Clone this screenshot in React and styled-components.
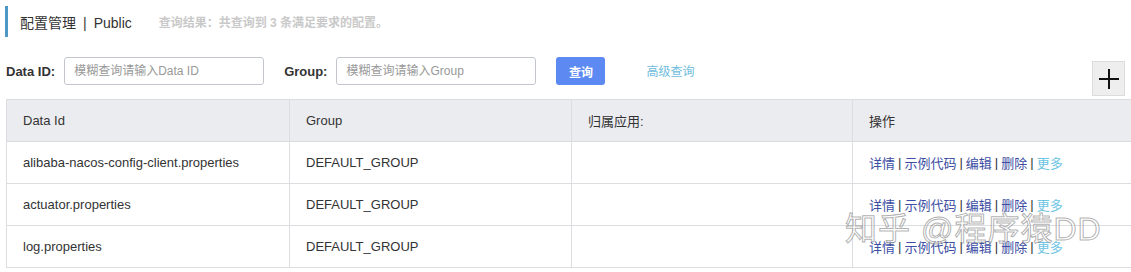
import React from "react";
import styled, { createGlobalStyle } from "styled-components";

const Global = createGlobalStyle`
  html, body { margin: 0; padding: 0; background: #fff; overflow: hidden; }
  body { font-family: "Liberation Sans", Arial, "Noto Sans CJK SC", sans-serif; color: #333; }
`;

const Page = styled.div`
  position: relative;
  width: 1131px;
  height: 272px;
  overflow: hidden;
  padding: 6px 0 0 6px;
  box-sizing: border-box;
`;

const TitleBar = styled.div`
  display: flex;
  align-items: center;
  height: 31px;
  margin-left: -1px;
  border-left: 3px solid #4e98c6;
  padding-left: 12px;
`;

const Title = styled.span`
  font-size: 14px;
  color: #333;
  margin-right: 27px;
`;

const Sep = styled.span`
  margin: 0 7px;
`;

const Hint = styled.span`
  font-size: 12px;
  font-weight: bold;
  color: #c9c9c9;
`;

const Toolbar = styled.div`
  display: flex;
  align-items: flex-start;
  margin-top: 20px;
  height: 39px;
  margin-bottom: 3px;
  padding-right: 6px;
`;

const SearchRow = styled.div`
  display: flex;
  align-items: center;
  height: 28px;
  flex: 1;
`;

const Label = styled.label`
  font-size: 13px;
  font-weight: bold;
  color: #333;
  margin-right: ${(p) => p.$mr}px;
`;

const Input = styled.input`
  width: 200px;
  height: 28px;
  box-sizing: border-box;
  border: 1px solid #c4c6cf;
  border-radius: 3px;
  padding: 0 9px;
  font-size: 12px;
  font-family: inherit;
  margin-right: ${(p) => p.$mr}px;
  outline: none;
  &::placeholder { color: #999; }
`;

const PrimaryButton = styled.button`
  width: 49px;
  height: 28px;
  border: none;
  border-radius: 3px;
  background: #5d89f3;
  color: #fff;
  font-size: 12px;
  font-weight: bold;
  font-family: inherit;
  margin-right: 41px;
`;

const LinkText = styled.a`
  font-size: 12px;
  color: #6ebcdc;
  margin-top: -2px;
`;

const PlusButton = styled.div`
  width: 33px;
  height: 35px;
  box-sizing: border-box;
  margin-top: 4px;
  background: #eeeeee;
  border: 1px solid #dcdcdc;
  display: flex;
  align-items: center;
  justify-content: center;
`;

const Table = styled.div`
  width: 1128px;
  border-top: 1px solid #dcdde1;
  border-left: 1px solid #dcdde1;
`;

const Row = styled.div`
  display: grid;
  grid-template-columns: 283px 282px 281px 282px;
  height: 42px;
  background: ${(p) => (p.$head ? "#ebecf0" : "#fff")};
`;

const Cell = styled.div`
  display: flex;
  align-items: center;
  padding-left: 16px;
  font-size: 13px;
  color: #333;
  border-right: 1px solid #dcdde1;
  border-bottom: 1px solid #dcdde1;
`;

const Action = styled.a`
  color: ${(p) => (p.$light ? "#6ec4e3" : "#3c4ea3")};
`;

const Pipe = styled.span`
  color: #333;
  margin: 0 3px;
`;

const Watermark = styled.div`
  position: absolute;
  left: 845px;
  top: 203px;
  font-size: 32px;
  font-family: "Liberation Sans", "Noto Sans CJK SC", sans-serif;
  color: rgba(255, 255, 255, 0.55);
  -webkit-text-stroke: 1px rgba(110, 110, 110, 0.55);
  letter-spacing: 1px;
  pointer-events: none;
  white-space: nowrap;
`;

const rows = [
  "alibaba-nacos-config-client.properties",
  "actuator.properties",
  "log.properties",
];

function Actions() {
  return (
    <>
      <Action>详情</Action>
      <Pipe>|</Pipe>
      <Action>示例代码</Action>
      <Pipe>|</Pipe>
      <Action>编辑</Action>
      <Pipe>|</Pipe>
      <Action>删除</Action>
      <Pipe>|</Pipe>
      <Action $light>更多</Action>
    </>
  );
}

export default function App() {
  return (
    <>
      <Global />
      <Page>
        <TitleBar>
          <Title>
            配置管理<Sep>|</Sep>Public
          </Title>
          <Hint>查询结果：共查询到 3 条满足要求的配置。</Hint>
        </TitleBar>
        <Toolbar>
          <SearchRow>
            <Label $mr={9}>Data ID:</Label>
            <Input $mr={20} placeholder="模糊查询请输入Data ID" />
            <Label $mr={9}>Group:</Label>
            <Input $mr={20} placeholder="模糊查询请输入Group" />
            <PrimaryButton>查询</PrimaryButton>
            <LinkText>高级查询</LinkText>
          </SearchRow>
          <PlusButton>
            <svg width="22" height="22" viewBox="0 0 22 22">
              <path d="M11 1v20M1 11h20" stroke="#111" strokeWidth="2" />
            </svg>
          </PlusButton>
        </Toolbar>
        <Table>
          <Row $head>
            <Cell>Data Id</Cell>
            <Cell>Group</Cell>
            <Cell>归属应用:</Cell>
            <Cell>操作</Cell>
          </Row>
          {rows.map((r) => (
            <Row key={r}>
              <Cell>{r}</Cell>
              <Cell>DEFAULT_GROUP</Cell>
              <Cell />
              <Cell>
                <Actions />
              </Cell>
            </Row>
          ))}
        </Table>
        <Watermark>知乎 @程序猿DD</Watermark>
      </Page>
    </>
  );
}
